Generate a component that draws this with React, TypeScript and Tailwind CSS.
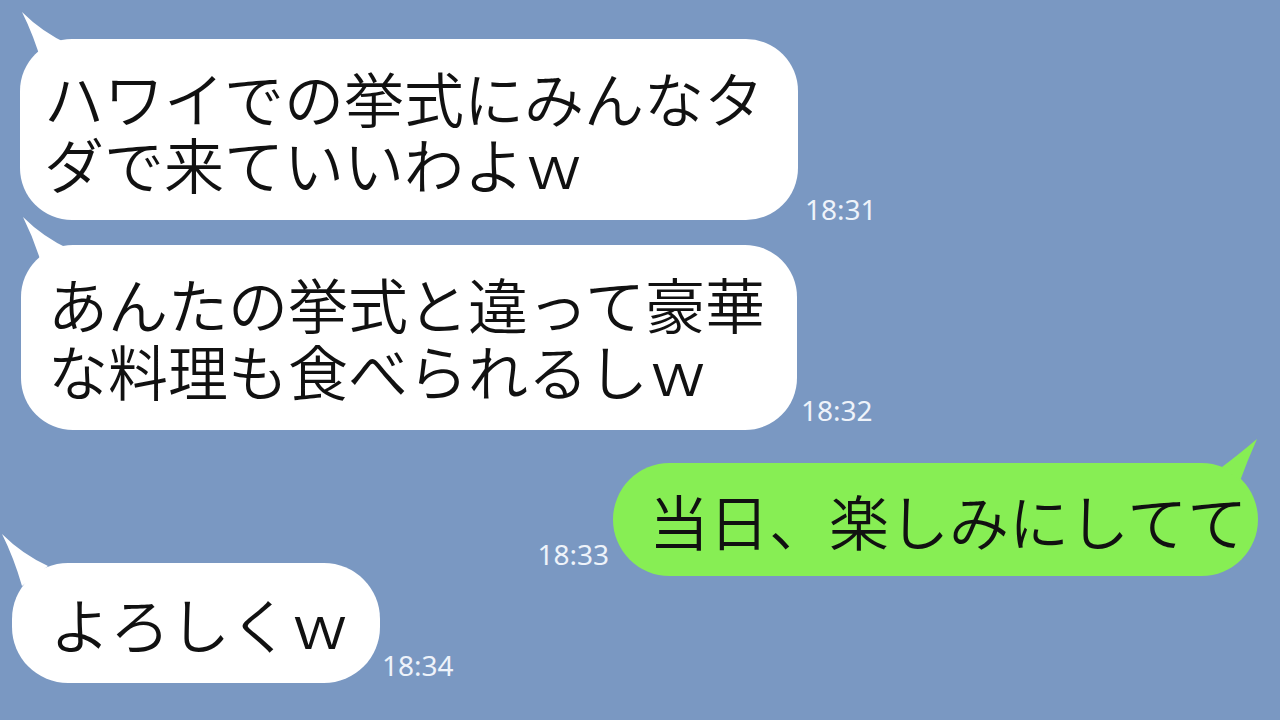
import React from "react";

const jp = { fontFamily: '"Noto Sans CJK JP", "Noto Sans", sans-serif' };
const ts = { fontFamily: '"Noto Sans", "DejaVu Sans", sans-serif' };

function LeftTail({ className }: { className: string }) {
  return (
    <svg className={className} width="60" height="60" viewBox="0 0 60 60" fill="#ffffff">
      <path d="M2 0 Q22 20 48 32 L22 52 Q14 24 2 0 Z" />
    </svg>
  );
}

function RightTail() {
  return (
    <svg className="absolute right-0 top-[-24px]" width="50" height="50" viewBox="0 0 50 50" fill="#87ee54">
      <path d="M49 0 Q30 16 14 28 L32 42 Q40 20 49 0 Z" />
    </svg>
  );
}

export default function App() {
  return (
    <div className="w-[1280px] h-[720px] overflow-hidden bg-[#7a98c2] flex flex-col font-[350]" style={jp}>
      {/* Row 1 */}
      <div className="flex items-end mt-[39px] ml-[20px]">
        <div className="relative w-[778px] h-[181px] bg-white rounded-[52px] pl-[24px] pt-[25px] text-[60px] leading-[66px] text-[#111] whitespace-nowrap">
          <LeftTail className="absolute left-0 top-[-27px]" />
          <div className="relative">ハワイでの挙式にみんなタ</div>
          <div className="relative">ダで来ていいわよｗ</div>
        </div>
        <div className="ml-[7px] mb-[-3px] text-[28px] font-normal leading-none text-[#eef3fa]" style={ts}>18:31</div>
      </div>

      {/* Row 2 */}
      <div className="flex items-end mt-[25px] ml-[21px]">
        <div className="relative w-[776px] h-[185px] bg-white rounded-[52px] pl-[27px] pt-[24px] text-[60px] leading-[67px] text-[#111] whitespace-nowrap">
          <LeftTail className="absolute left-0 top-[-28px]" />
          <div className="relative">あんたの挙式と違って豪華</div>
          <div className="relative">な料理も食べられるしｗ</div>
        </div>
        <div className="ml-[4px] mb-[6px] text-[28px] font-normal leading-none text-[#eef3fa]" style={ts}>18:32</div>
      </div>

      {/* Row 3 */}
      <div className="flex items-end justify-end mt-[33px] mr-[22px]">
        <div className="mr-[4px] mb-[8px] text-[28px] font-normal leading-none text-[#eef3fa]" style={ts}>18:33</div>
        <div className="relative w-[645px] h-[113px] bg-[#87ee54] rounded-full pl-[36px] flex items-center text-[60px] leading-none text-[#111] whitespace-nowrap">
          <RightTail />
          <span className="relative">当日、楽しみにしてて</span>
        </div>
      </div>

      {/* Row 4 */}
      <div className="flex items-end mt-[-13px] ml-[12px]">
        <div className="relative w-[368px] h-[120px] bg-white rounded-[56px] pl-[38px] flex items-center text-[60px] leading-none text-[#111] whitespace-nowrap">
          <LeftTail className="absolute left-[-12px] top-[-29px]" />
          <span className="relative">よろしくｗ</span>
        </div>
        <div className="ml-[2px] mb-[4px] text-[28px] font-normal leading-none text-[#eef3fa]" style={ts}>18:34</div>
      </div>
    </div>
  );
}
